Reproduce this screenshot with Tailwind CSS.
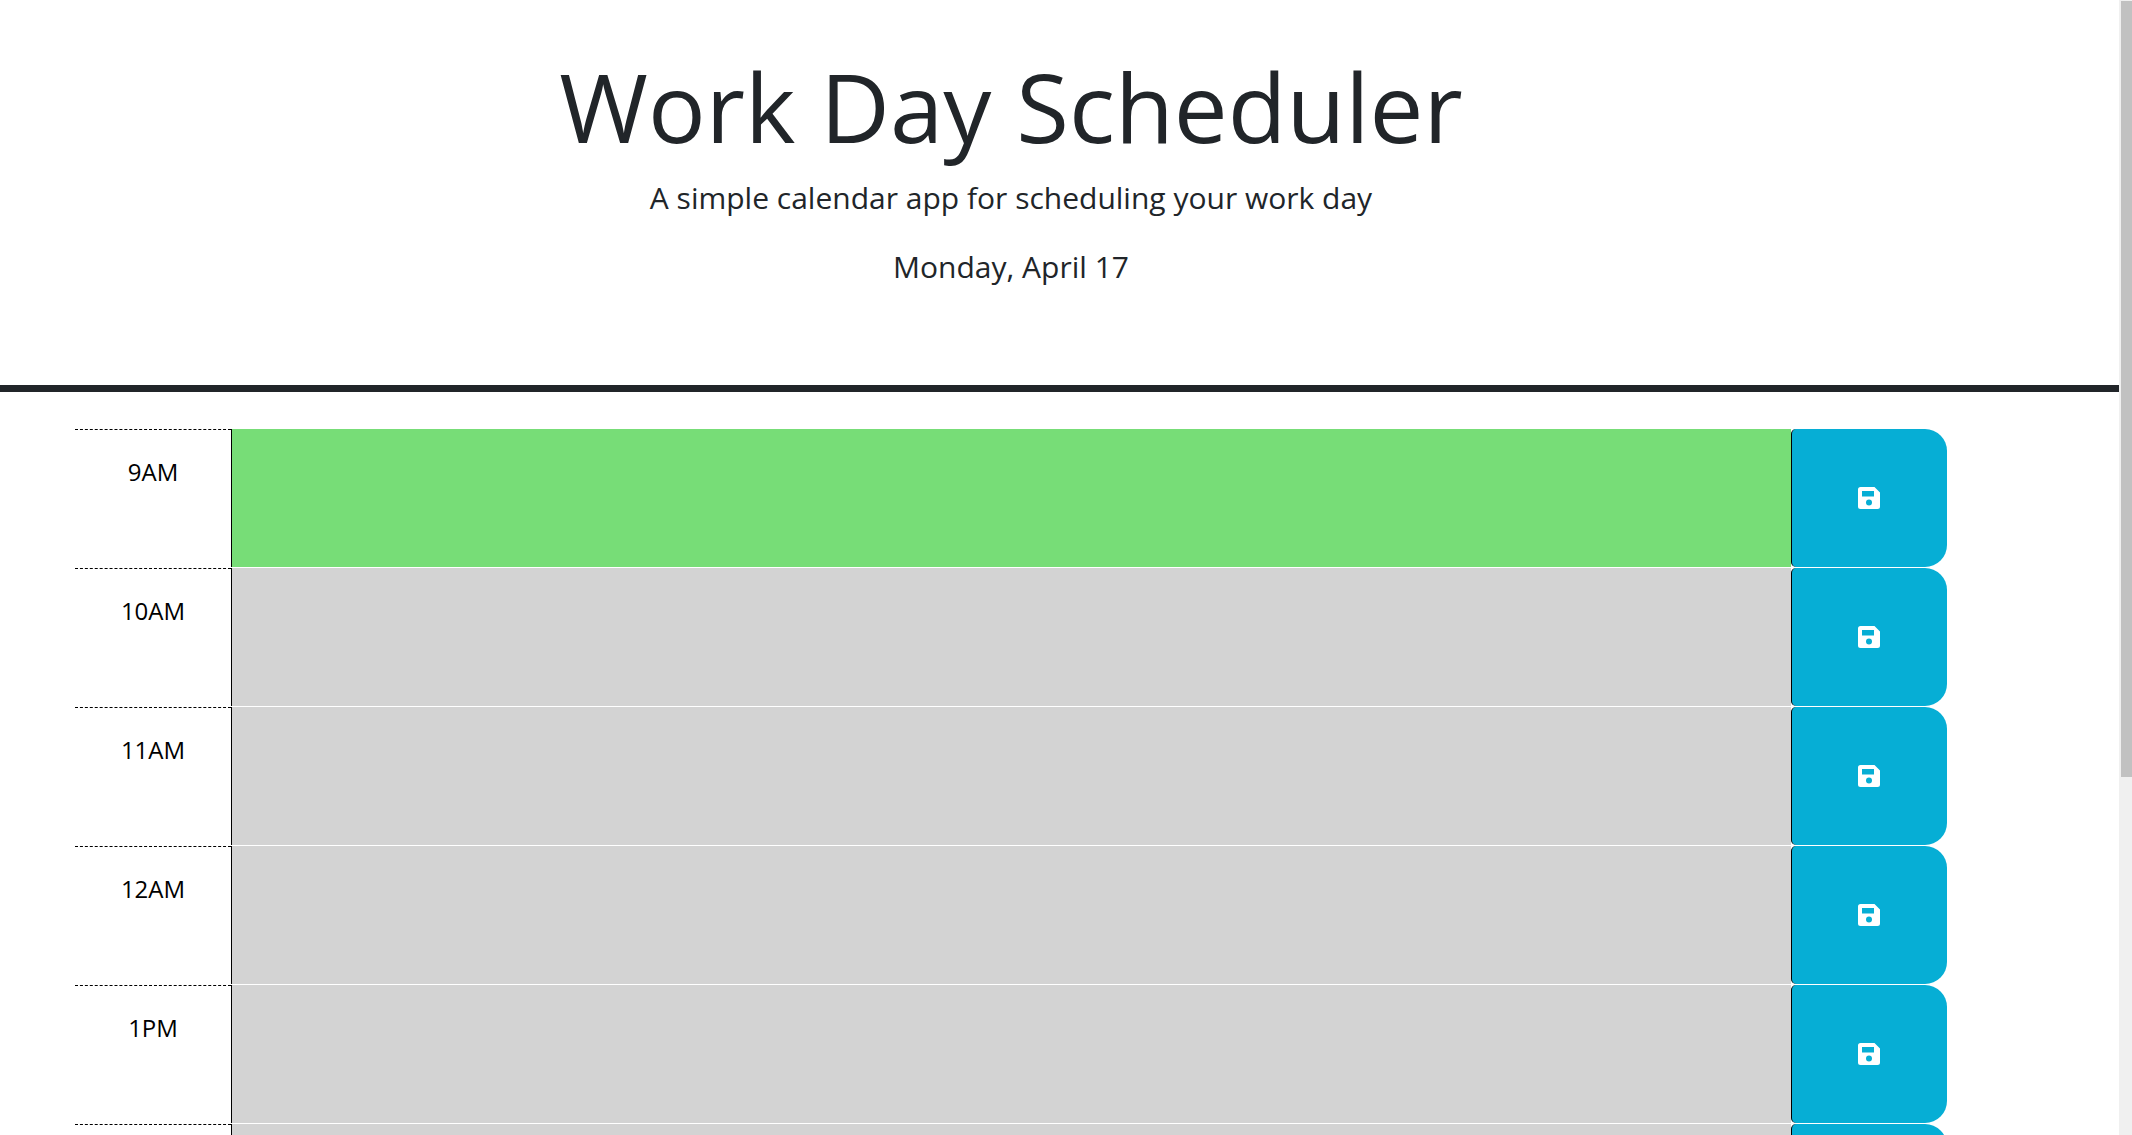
<!DOCTYPE html>
<html lang="en">
<head>
<meta charset="utf-8">
<title>Work Day Scheduler</title>
<script src="https://cdn.jsdelivr.net/npm/@tailwindcss/browser@4"></script>
</head>
<body class="flex h-screen overflow-hidden bg-white font-['Open_Sans',sans-serif] text-2xl text-black">
<div class="min-w-0 flex-1 overflow-hidden">
  <header class="border-b-[7px] border-[#212529] pt-12 pr-[97px] pb-24 text-center text-[30px] leading-[45px] text-[#212529]">
    <h1 class="mb-3 text-8xl leading-[115px]">Work Day Scheduler</h1>
    <p class="mb-6">A simple calendar app for scheduling your work day</p>
    <p>Monday, April 17</p>
  </header>
  <main id="hours" class="pt-[37px] pr-[172px] pl-[75px]"></main>
</div>
<div class="w-[13px] shrink-0 bg-[#f0f0f0] pt-px pl-0.5" aria-hidden="true">
  <div class="h-[68.4%] bg-[#c1c1c1]"></div>
</div>
<template id="row">
  <section class="grid h-[139px] grid-cols-12 border-b border-white">
    <label class="border-t border-dashed border-t-black pt-6 text-center leading-9"></label>
    <textarea class="col-span-10 block h-full w-full resize-none border-l border-black px-3 py-2 text-black outline-none"></textarea>
    <button type="button" class="flex items-center justify-center rounded-l-[5px] rounded-r-[22px] border-l border-black bg-[#06aed5] pr-px text-white">
      <svg class="size-[22px]" viewBox="0 0 22 22" fill="currentColor" aria-hidden="true"><path fill-rule="evenodd" d="M2.5 0H16.500l5.500 5.500v14a2.500 2.500 0 0 1-2.500 2.500h-17A2.500 2.500 0 0 1 0 19.500v-17A2.500 2.500 0 0 1 2.500 0ZM4 4v5.500h12V4ZM11 12.500a3 3 0 1 0 0 6 3 3 0 0 0 0-6Z"/></svg>
    </button>
  </section>
</template>
<script>
  const main = document.getElementById('hours');
  const template = document.getElementById('row');
  ['9AM', '10AM', '11AM', '12AM', '1PM', '2PM'].forEach((hour, i) => {
    const row = template.content.cloneNode(true);
    const label = row.querySelector('label');
    const text = row.querySelector('textarea');
    label.textContent = hour;
    label.htmlFor = text.id = 'hour-' + hour;
    text.classList.add(i === 0 ? 'bg-[#77dd77]' : 'bg-[#d3d3d3]');
    row.querySelector('button').setAttribute('aria-label', 'Save ' + hour);
    main.append(row);
  });
</script>
</body>
</html>
